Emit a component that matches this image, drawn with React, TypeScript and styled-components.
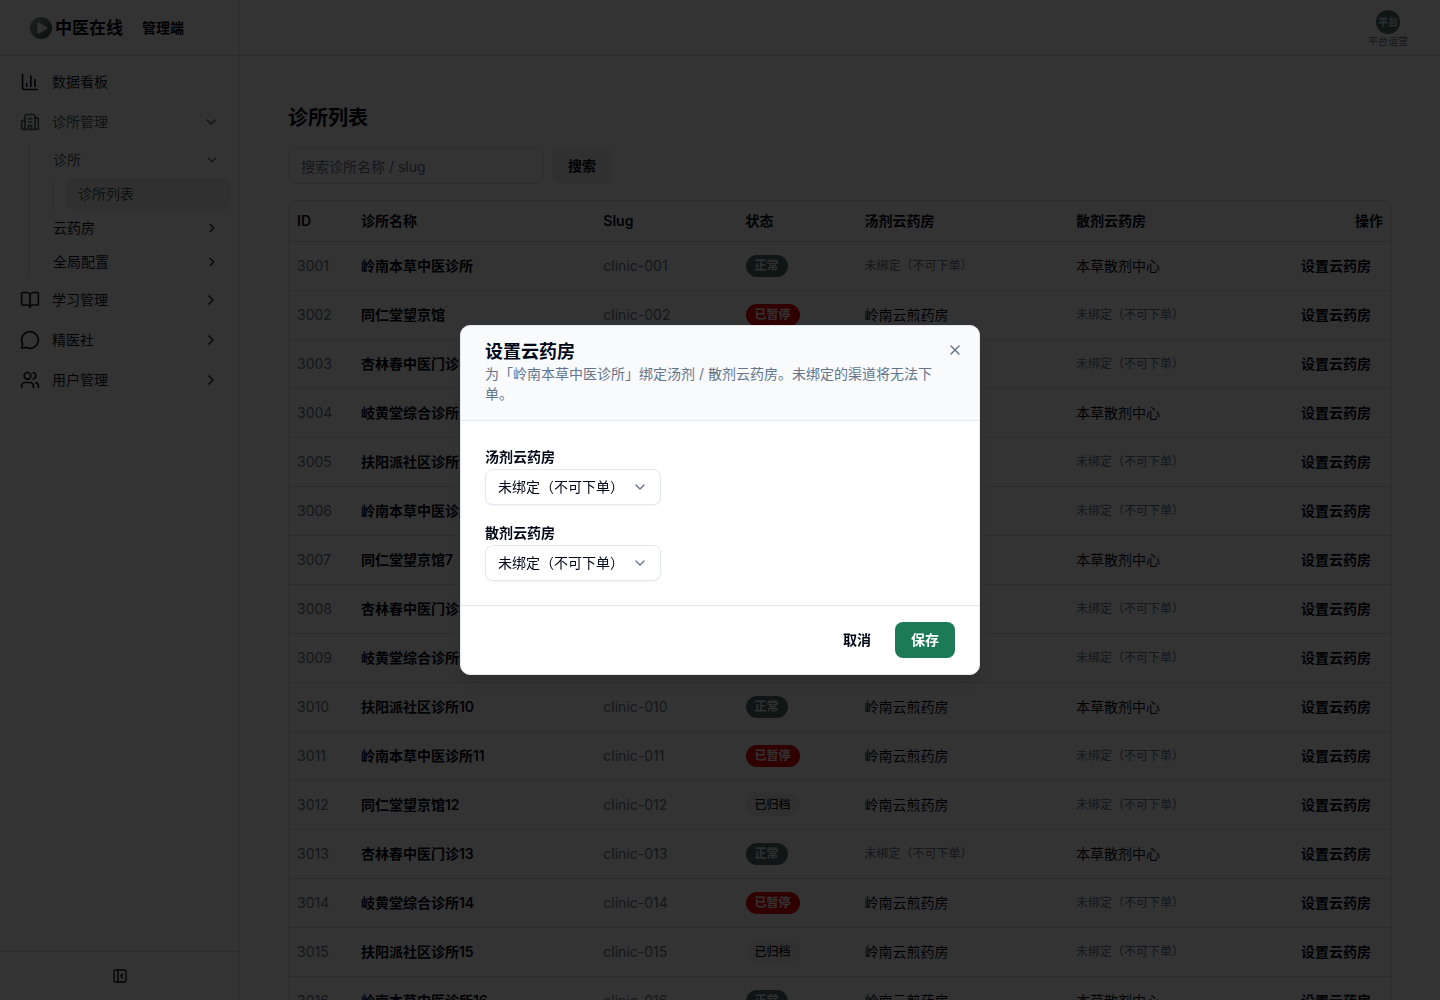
import React, { useState } from 'react';
import styled, { createGlobalStyle, css } from 'styled-components';
import {
  BookOpen,
  Building2,
  ChartColumn,
  ChevronDown,
  ChevronRight,
  MessageCircle,
  PanelLeftClose,
  Users,
  X,
} from 'lucide-react';

const colors = {
  text: '#020817',
  ink: '#0f172a',
  muted: '#64748b',
  line: '#e2e8f0',
  shellLine: '#dde2e6',
  soft: '#f0f0f0',
  header: '#f8fafc',
  primary: '#1d7a59',
  badge: '#4a706c',
  active: '#46605e',
  danger: '#f00000',
};

const GlobalStyle = createGlobalStyle`
  *, *::before, *::after { box-sizing: border-box; }
  body {
    margin: 0;
    color: ${colors.text};
    background: #fff;
    font-family: Inter, "Noto Sans CJK SC", sans-serif;
    font-size: 14px;
    line-height: 20px;
  }
  button, input, select { font: inherit; color: inherit; }
  button { cursor: pointer; border: 0; background: none; padding: 0; }
  a { color: inherit; text-decoration: none; }
  h1, h2, p { margin: 0; }
`;

const Shell = styled.div`
  display: grid;
  grid-template-columns: 240px minmax(0, 1fr);
  height: 100vh;
  overflow: hidden;
`;

const Sidebar = styled.aside`
  display: flex;
  flex-direction: column;
  border-right: 1px solid ${colors.shellLine};
  min-height: 0;
`;

const Brand = styled.div`
  display: flex;
  align-items: center;
  flex: none;
  height: 56px;
  padding-left: 29px;
  border-bottom: 1px solid ${colors.shellLine};
`;

const BrandName = styled.span`
  margin-left: 2px;
  font-size: 17px;
  font-weight: 600;
`;

const BrandRole = styled.span`
  margin-left: 19px;
  font-weight: 600;
`;

const Nav = styled.nav`
  display: flex;
  flex: 1;
  flex-direction: column;
  gap: 4px;
  padding: 8px;
`;

const NavItem = styled.button<{ $active?: boolean }>`
  display: flex;
  align-items: center;
  gap: 12px;
  height: 36px;
  padding: 0 12px;
  text-align: left;
  color: ${(p) => (p.$active ? colors.active : colors.ink)};
  span { flex: 1; }
`;

const SubTree = styled.div`
  display: flex;
  flex-direction: column;
  gap: 2px;
  margin-left: 20px;
  padding-left: 12px;
  border-left: 1px solid ${colors.shellLine};
`;

const SubItem = styled(NavItem)`
  height: 32px;
  padding: 0 12px;
`;

const LeafGroup = styled.div`
  margin-left: 12px;
  padding-left: 12px;
  border-left: 1px solid ${colors.shellLine};
`;

const Leaf = styled.a`
  display: block;
  padding: 6px 12px;
  border-radius: 8px;
  color: ${colors.active};
  background: ${colors.soft};
`;

const SidebarFoot = styled.div`
  display: flex;
  align-items: center;
  justify-content: center;
  height: 49px;
  border-top: 1px solid ${colors.shellLine};
`;

const CollapseButton = styled.button`
  display: grid;
`;

const Main = styled.main`
  display: flex;
  flex-direction: column;
  min-height: 0;
`;

const TopBar = styled.header`
  display: flex;
  flex: none;
  justify-content: flex-end;
  align-items: flex-start;
  height: 56px;
  padding: 10px 32px 0;
  border-bottom: 1px solid ${colors.shellLine};
`;

const Account = styled.button`
  display: flex;
  flex-direction: column;
  align-items: center;
  font-size: 10px;
  line-height: 14px;
  color: ${colors.muted};
`;

const Avatar = styled.span`
  display: grid;
  place-items: center;
  width: 24px;
  height: 24px;
  border-radius: 50%;
  color: #e2e8f0;
  background: ${colors.badge};
  font-weight: 600;
`;

const Page = styled.section`
  display: flex;
  flex: 1;
  flex-direction: column;
  gap: 16px;
  min-height: 0;
  padding: 48px;
  overflow: hidden;
`;

const PageTitle = styled.h1`
  font-size: 20px;
  line-height: 28px;
  font-weight: 600;
`;

const SearchBar = styled.form`
  display: flex;
  gap: 8px;
`;

const SearchInput = styled.input`
  width: 256px;
  height: 36px;
  padding: 0 12px;
  border: 1px solid ${colors.shellLine};
  border-radius: 8px;
  background: transparent;
  box-shadow: 0 1px 2px rgba(0, 0, 0, 0.05);
  &::placeholder { color: ${colors.muted}; opacity: 1; }
`;

const Button = styled.button<{ $tone?: 'soft' | 'primary' }>`
  height: 36px;
  padding: 0 16px;
  border-radius: 8px;
  font-weight: 600;
  ${(p) => p.$tone === 'soft' && css`background: ${colors.soft};`}
  ${(p) => p.$tone === 'primary' && css`
    color: #fff;
    background: ${colors.primary};
  `}
`;

const TableFrame = styled.div`
  flex: none;
  border: 1px solid ${colors.shellLine};
  border-radius: 8px;
  overflow: hidden;
`;

const Table = styled.table`
  width: 100%;
  border-collapse: collapse;
  table-layout: fixed;
`;

const Col = styled.col<{ $share?: number }>`
  width: ${(p) => (p.$share ? `${p.$share}%` : 'auto')};
`;

const Th = styled.th<{ $end?: boolean }>`
  height: 40px;
  padding: 0 8px;
  text-align: ${(p) => (p.$end ? 'right' : 'left')};
  font-weight: 600;
`;

const Tr = styled.tr`
  border-bottom: 1px solid ${colors.shellLine};
`;

const Td = styled.td<{ $strong?: boolean; $muted?: boolean; $end?: boolean }>`
  height: 49px;
  padding: 0 8px;
  white-space: nowrap;
  text-align: ${(p) => (p.$end ? 'right' : 'left')};
  font-weight: ${(p) => (p.$strong ? 600 : 400)};
  color: ${(p) => (p.$muted ? colors.muted : 'inherit')};
`;

const Unbound = styled.span`
  font-size: 12px;
  color: ${colors.muted};
`;

const RowAction = styled.button`
  height: 32px;
  padding: 0 12px;
  font-weight: 600;
`;

type Status = 'ok' | 'paused' | 'archived';

const badgeTone = {
  ok: css`color: #e8eeee; background: ${colors.badge}; font-weight: 600;`,
  paused: css`color: #f8fafc; background: ${colors.danger}; font-weight: 600;`,
  archived: css`color: ${colors.ink}; background: ${colors.soft}; font-weight: 500;`,
};

const Badge = styled.span<{ $status: Status }>`
  display: inline-block;
  padding: 3px 9px;
  border-radius: 11px;
  font-size: 12px;
  line-height: 16px;
  vertical-align: middle;
  ${(p) => badgeTone[p.$status]}
`;

const Overlay = styled.div`
  position: fixed;
  inset: 0;
  display: grid;
  place-items: center;
  background: rgba(0, 0, 0, 0.8);
`;

const Dialog = styled.div`
  width: 520px;
  max-width: 100%;
  border: 1px solid ${colors.line};
  border-radius: 10px;
  background: #fff;
  overflow: hidden;
  box-shadow: 0 10px 15px rgba(0, 0, 0, 0.1);
`;

const DialogHead = styled.header`
  display: flex;
  align-items: flex-start;
  padding: 16px 16px 16px 24px;
  border-bottom: 1px solid ${colors.line};
  background: ${colors.header};
`;

const DialogHeading = styled.div`
  display: flex;
  flex: 1;
  flex-direction: column;
  color: ${colors.muted};
`;

const DialogTitle = styled.h2`
  padding-bottom: 2px;
  font-size: 18px;
  line-height: 20px;
  font-weight: 600;
  color: ${colors.text};
`;

const CloseButton = styled.button`
  display: grid;
  height: 16px;
  color: ${colors.muted};
`;

const DialogBody = styled.div`
  display: flex;
  flex-direction: column;
  gap: 16px;
  padding: 24px;
`;

const Field = styled.div`
  display: flex;
  flex-direction: column;
  align-items: flex-start;
`;

const Label = styled.label`
  line-height: 24px;
  font-weight: 600;
`;

const SelectBox = styled.div`
  display: grid;
  align-items: center;
  width: 176px;
  svg {
    grid-area: 1 / 1;
    justify-self: end;
    margin-right: 13px;
    color: ${colors.muted};
    pointer-events: none;
  }
`;

const Select = styled.select`
  grid-area: 1 / 1;
  width: 100%;
  height: 36px;
  padding: 0 12px;
  appearance: none;
  border: 1px solid ${colors.line};
  border-radius: 8px;
  background: #fff;
  box-shadow: 0 1px 2px rgba(0, 0, 0, 0.05);
`;

const DialogFoot = styled.footer`
  display: flex;
  justify-content: flex-end;
  gap: 8px;
  padding: 16px 24px;
  border-top: 1px solid ${colors.line};
`;

const clinicNames = ['岭南本草中医诊所', '同仁堂望京馆', '杏林春中医门诊', '岐黄堂综合诊所', '扶阳派社区诊所'];
const statusCycle: Status[] = ['ok', 'paused', 'archived'];
const statusText = { ok: '正常', paused: '已暂停', archived: '已归档' };

const clinics = Array.from({ length: 16 }, (_, i) => {
  const n = i + 1;
  return {
    id: 3000 + n,
    name: clinicNames[i % 5] + (n > 5 ? n : ''),
    slug: `clinic-${String(n).padStart(3, '0')}`,
    status: statusCycle[i % 3],
    decoction: i % 4 === 0 ? null : '岭南云煎药房',
    powder: i % 3 === 0 ? '本草散剂中心' : null,
  };
});

function Logo() {
  return (
    <svg width="24" height="24" viewBox="0 0 24 24" aria-hidden="true">
      <defs>
        <linearGradient id="logo-fill" x1="0" y1="0.2" x2="1" y2="0.8">
          <stop offset="0" stopColor="#8e9a9a" />
          <stop offset="0.5" stopColor="#6a7f7d" />
          <stop offset="1" stopColor="#344f4c" />
        </linearGradient>
      </defs>
      <circle cx="12" cy="12" r="11" fill="url(#logo-fill)" />
      <path d="M9 7v10l8.5-5z" fill="#f2f4f4" stroke="#f2f4f4" strokeWidth="1.5" strokeLinejoin="round" />
    </svg>
  );
}

function Pharmacy({ name }: { name: string | null }) {
  return name ? <>{name}</> : <Unbound>未绑定（不可下单）</Unbound>;
}

function PharmacySelect({ id, label }: { id: string; label: string }) {
  return (
    <Field>
      <Label htmlFor={id}>{label}</Label>
      <SelectBox>
        <Select id={id}>
          <option>未绑定（不可下单）</option>
        </Select>
        <ChevronDown size={16} />
      </SelectBox>
    </Field>
  );
}

export default function App() {
  const [open, setOpen] = useState(true);
  return (
    <>
      <GlobalStyle />
      <Shell>
        <Sidebar>
          <Brand>
            <Logo />
            <BrandName>中医在线</BrandName>
            <BrandRole>管理端</BrandRole>
          </Brand>
          <Nav>
            <NavItem><ChartColumn size={20} /><span>数据看板</span></NavItem>
            <NavItem $active><Building2 size={20} /><span>诊所管理</span><ChevronDown size={16} /></NavItem>
            <SubTree>
              <SubItem $active><span>诊所</span><ChevronDown size={14} /></SubItem>
              <LeafGroup><Leaf href="#clinics">诊所列表</Leaf></LeafGroup>
              <SubItem><span>云药房</span><ChevronRight size={14} /></SubItem>
              <SubItem><span>全局配置</span><ChevronRight size={14} /></SubItem>
            </SubTree>
            <NavItem><BookOpen size={20} /><span>学习管理</span><ChevronRight size={16} /></NavItem>
            <NavItem><MessageCircle size={20} /><span>精医社</span><ChevronRight size={16} /></NavItem>
            <NavItem><Users size={20} /><span>用户管理</span><ChevronRight size={16} /></NavItem>
          </Nav>
          <SidebarFoot>
            <CollapseButton type="button" aria-label="收起侧栏"><PanelLeftClose size={16} /></CollapseButton>
          </SidebarFoot>
        </Sidebar>
        <Main>
          <TopBar>
            <Account><Avatar>平台</Avatar>平台运营</Account>
          </TopBar>
          <Page>
            <PageTitle>诊所列表</PageTitle>
            <SearchBar>
              <SearchInput aria-label="搜索诊所" placeholder="搜索诊所名称 / slug" />
              <Button type="button" $tone="soft">搜索</Button>
            </SearchBar>
            <TableFrame>
              <Table>
                <colgroup>
                  <Col $share={5.8} />
                  <Col $share={22} />
                  <Col $share={12.9} />
                  <Col $share={10.8} />
                  <Col $share={19.2} />
                  <Col $share={18.5} />
                  <Col />
                </colgroup>
                <thead>
                  <Tr>
                    <Th>ID</Th>
                    <Th>诊所名称</Th>
                    <Th>Slug</Th>
                    <Th>状态</Th>
                    <Th>汤剂云药房</Th>
                    <Th>散剂云药房</Th>
                    <Th $end>操作</Th>
                  </Tr>
                </thead>
                <tbody>
                  {clinics.map((c) => (
                    <Tr key={c.id}>
                      <Td $muted>{c.id}</Td>
                      <Td $strong>{c.name}</Td>
                      <Td $muted>{c.slug}</Td>
                      <Td><Badge $status={c.status}>{statusText[c.status]}</Badge></Td>
                      <Td><Pharmacy name={c.decoction} /></Td>
                      <Td><Pharmacy name={c.powder} /></Td>
                      <Td $end><RowAction onClick={() => setOpen(true)}>设置云药房</RowAction></Td>
                    </Tr>
                  ))}
                </tbody>
              </Table>
            </TableFrame>
          </Page>
        </Main>
      </Shell>
      {open && (
        <Overlay>
          <Dialog role="dialog" aria-modal="true" aria-labelledby="dialog-title">
            <DialogHead>
              <DialogHeading>
                <DialogTitle id="dialog-title">设置云药房</DialogTitle>
                <p>为「岭南本草中医诊所」绑定汤剂 / 散剂云药房。未绑定的渠道将无法下单。</p>
              </DialogHeading>
              <CloseButton aria-label="关闭" onClick={() => setOpen(false)}><X size={16} /></CloseButton>
            </DialogHead>
            <DialogBody>
              <PharmacySelect id="decoction" label="汤剂云药房" />
              <PharmacySelect id="powder" label="散剂云药房" />
            </DialogBody>
            <DialogFoot>
              <Button type="button" onClick={() => setOpen(false)}>取消</Button>
              <Button type="button" $tone="primary">保存</Button>
            </DialogFoot>
          </Dialog>
        </Overlay>
      )}
    </>
  );
}
